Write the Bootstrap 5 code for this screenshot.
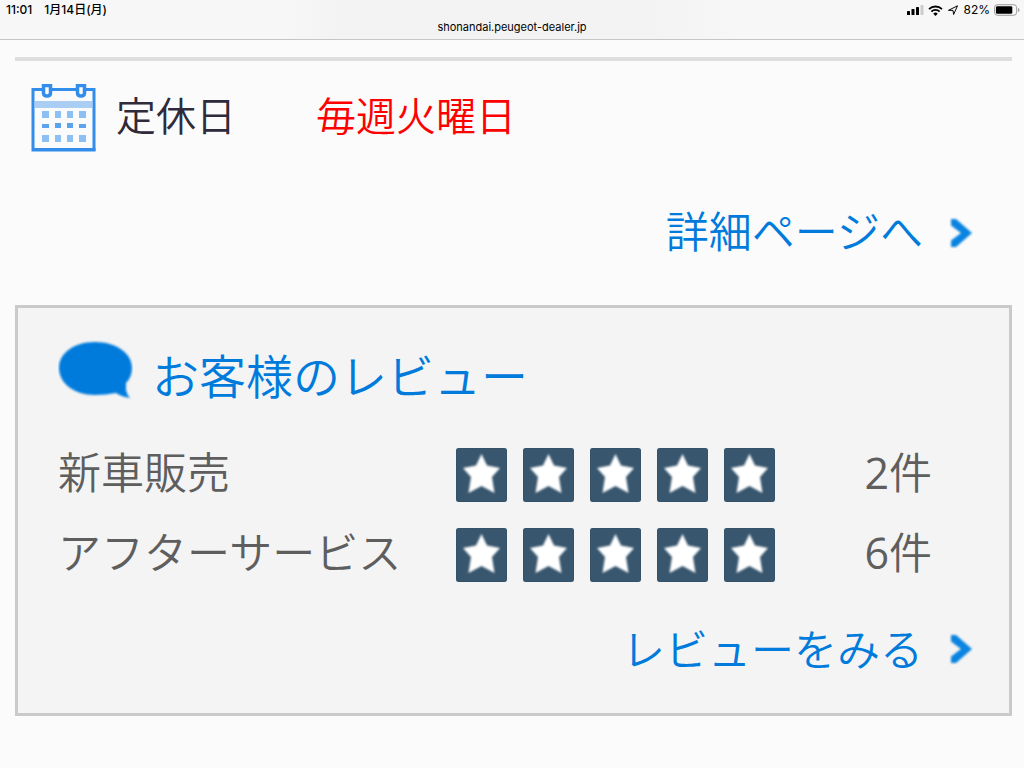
<!DOCTYPE html>
<html lang="ja">
<head>
<meta charset="utf-8">
<meta name="viewport" content="width=device-width, initial-scale=1">
<title>shonandai.peugeot-dealer.jp</title>
<link href="https://cdn.jsdelivr.net/npm/bootstrap@5.3.0/dist/css/bootstrap.min.css" rel="stylesheet">
<style>
  body { background: #fbfbfb; color: #5e5e5e; font-family: "Open Sans", "Noto Sans CJK JP", sans-serif; }
  .jp-light { font-family: "Noto Sans CJK JP DemiLight", "Noto Sans CJK JP", sans-serif; font-weight: 350; }
  .top-bar { height: 40px; background: linear-gradient(90deg, #f7f7f7 28%, #f3f3f3 33%, #f3f3f3 64%, #f7f7f7 72%); border-bottom: 1px solid #c6c6c6; color: #000; font: 12px/20px Inter, "Noto Sans CJK JP", sans-serif; }
  .status-row { height: 20px; }
  .top-bar .clock { font-weight: 500; padding-left: 6px; gap: 12px; }
  .site-address { font-size: 11px; line-height: 14px; }
  .page-body { padding: 17px 12px 0 15px; }
  .rule-line { border: 0; border-top: 4px solid #dedede; opacity: 1; margin: 0; }
  .closed-day { font-size: 40px; line-height: 60px; padding: 23px 16px 0; margin: 0; }
  .closed-day dt { color: #2f2b3a; width: 285px; gap: 19px; font-weight: 350; }
  .closed-day dd { color: #f00; }
  .more-link { color: #007bdc; font-size: 43px; line-height: 64px; gap: 28px; text-decoration: none; }
  .detail-row { padding: 45px 39px 0; }
  .review-panel { margin-top: 44px; border: 3px solid #cacaca; background: #f4f4f4; padding: 29px 36px 34px 40px; }
  .review-title { color: #007bdc; font-size: 47px; line-height: 74px; gap: 19px; margin: 0 0 24px; }
  .review-table { width: 100%; font-size: 43px; line-height: 60px; }
  .review-table th, .review-table td { padding: 0; height: 80px; vertical-align: middle; }
  .review-table .col-name { width: 398px; padding-bottom: 10px; }
  .review-table .count { padding: 0 41px 4px 0; }
  .count .jp-light { line-height: 1; }
  .review-more { margin-top: 20px; }
  .stars { gap: 16px; }
  .star-box { width: 51px; height: 54px; border-radius: 3px; background: #38566e; box-shadow: inset 0 0 1px #1d3d55; }
  .star-box svg { filter: blur(1px); }
  .soft { filter: blur(1px); }
</style>
</head>
<body>
<svg class="d-none" xmlns="http://www.w3.org/2000/svg">
  <symbol id="star" viewBox="0 0 51 54"><path fill="#fff" d="M25.500 6 L31 17.500 L44 20 L36 29 L38.500 45 L25.500 38 L12.500 45 L15 29 L7 20 L20 17.500 Z"/></symbol>
  <symbol id="chevron" viewBox="0 0 22 28"><path fill="#0a84e0" d="M0 0 H5 L21 14 L5 28 H0 V21.500 L10 14 L0 6.500 Z"/></symbol>
</svg>

<header class="top-bar">
  <div class="status-row d-flex justify-content-between">
    <div class="clock d-flex"><span>11:01</span><span>1月14日(月)</span></div>
    <div class="d-flex align-items-center gap-1 pe-1">
      <svg width="17" height="10" viewBox="0 0 17 10" aria-hidden="true"><rect y="6" width="3" height="4" rx=".6"/><rect x="4.500" y="4" width="3" height="6" rx=".6"/><rect x="9" y="2" width="3" height="8" rx=".6"/><rect x="13.500" width="3" height="10" rx=".6" fill="#ccc"/></svg>
      <svg width="15" height="11" viewBox="0 0 15 11" fill="none" stroke="#000" stroke-width="1.800" aria-hidden="true"><path d="M1 4.200a9.200 9.200 0 0 1 13 0M3.400 6.600a5.800 5.800 0 0 1 8.200 0"/><path d="M7.500 11 5.300 8.700a3.100 3.100 0 0 1 4.400 0Z" fill="#000" stroke="none"/></svg>
      <svg width="12" height="10" viewBox="1 0 12 10" fill="none" stroke="#000" aria-hidden="true"><path d="M2.500 5.300 11.500.8 7.600 9.500 7 5.400Z"/></svg>
      <span>82%</span>
      <svg width="26" height="12" viewBox="0 0 27 12" aria-hidden="true"><rect x=".5" y=".5" width="23" height="11" rx="3" fill="none" stroke="#999"/><rect x="2" y="2" width="17" height="8" rx="1.500"/><path d="M25 4v4q1.500-.6 1.500-2T25 4Z" fill="#999"/></svg>
    </div>
  </div>
  <div class="site-address text-center">shonandai.peugeot-dealer.jp</div>
</header>

<main class="page-body">
  <hr class="rule-line">
  <dl class="closed-day jp-light d-flex align-items-start">
    <dt class="d-flex align-items-start">
      <svg class="flex-shrink-0" width="66" height="68" viewBox="0 0 66 68" aria-hidden="true">
        <g style="filter:blur(.7px)">
          <path d="M2 5.500H63V66H2Z" fill="#fbfbfb" stroke="#328eea" stroke-width="3"/>
          <path d="M4 17H61V24H4Z" fill="#a9cdf3"/><path d="M1 65.500H64.500" stroke="#328eea" stroke-width="3"/>
          <path d="M12.500 1.500V9Q12.500 12 16 12T19.500 9V1.500ZM46.500 1.500V9Q46.500 12 50 12T53.500 9V1.500Z" fill="#fbfbfb" stroke="#328eea" stroke-width="3.500"/>
          <g fill="#8cbff2"><path d="M11 27h7v7h-7zM24 27h6v7h-6zM36 27h6v7h-6zM48 27h7v7h-7zM11 51h7v7h-7zM24 51h6v7h-6zM36 51h6v7h-6zM48 51h7v7h-7z"/><path fill="#5ba3ed" d="M11 40h7v4h-7zM24 39h6v5h-6zM36 39h6v5h-6zM48 40h7v4h-7z"/></g>
        </g>
      </svg>
      定休日
    </dt>
    <dd class="mb-0">毎週火曜日</dd>
  </dl>

  <div class="detail-row d-flex justify-content-end">
    <a href="#" class="more-link jp-light d-flex align-items-center">詳細ページへ
      <svg class="soft mt-2" width="22" height="28" aria-hidden="true"><use href="#chevron"/></svg></a>
  </div>

  <section class="review-panel">
    <h2 class="review-title jp-light d-flex align-items-start">
      <svg width="75" height="68" viewBox="0 0 75 68" aria-hidden="true"><path style="filter:blur(.8px)" fill="#007bdc" d="M37 5C58 5 74 16 74 31Q74 40 68 46V53Q69 58 72 61Q64 60 58 56Q48 58 37 58C16 58 1 46 1 31S16 5 37 5Z"/></svg>
      お客様のレビュー
    </h2>
    <table class="review-table">
      <tbody>
        <tr>
          <th scope="row" class="col-name jp-light">新車販売</th>
          <td><div class="stars d-flex" role="img" aria-label="5">
            <span class="star-box d-flex"><svg width="51" height="54"><use href="#star"/></svg></span>
            <span class="star-box d-flex"><svg width="51" height="54"><use href="#star"/></svg></span>
            <span class="star-box d-flex"><svg width="51" height="54"><use href="#star"/></svg></span>
            <span class="star-box d-flex"><svg width="51" height="54"><use href="#star"/></svg></span>
            <span class="star-box d-flex"><svg width="51" height="54"><use href="#star"/></svg></span>
          </div></td>
          <td class="count text-end">2<span class="jp-light">件</span></td>
        </tr>
        <tr>
          <th scope="row" class="col-name jp-light">アフターサービス</th>
          <td><div class="stars d-flex" role="img" aria-label="5">
            <span class="star-box d-flex"><svg width="51" height="54"><use href="#star"/></svg></span>
            <span class="star-box d-flex"><svg width="51" height="54"><use href="#star"/></svg></span>
            <span class="star-box d-flex"><svg width="51" height="54"><use href="#star"/></svg></span>
            <span class="star-box d-flex"><svg width="51" height="54"><use href="#star"/></svg></span>
            <span class="star-box d-flex"><svg width="51" height="54"><use href="#star"/></svg></span>
          </div></td>
          <td class="count text-end">6<span class="jp-light">件</span></td>
        </tr>
      </tbody>
    </table>
    <div class="review-more d-flex justify-content-end">
      <a href="#" class="more-link jp-light d-flex align-items-center">レビューをみる
        <svg class="soft mt-1" width="22" height="28" aria-hidden="true"><use href="#chevron"/></svg></a>
    </div>
  </section>
</main>
<script src="https://cdn.jsdelivr.net/npm/bootstrap@5.3.0/dist/js/bootstrap.bundle.min.js"></script>
</body>
</html>
